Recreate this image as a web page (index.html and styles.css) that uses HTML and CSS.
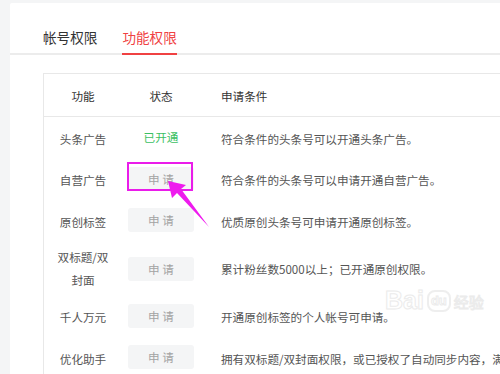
FILE: index.html
```html
<!DOCTYPE html>
<html lang="zh">
<head>
<meta charset="utf-8">
<title>功能权限</title>
<link rel="stylesheet" href="styles.css">
</head>
<body>
<div class="card">
  <div class="tabs">
    <div class="tab">帐号权限</div>
    <div class="tab active">功能权限</div>
  </div>
  <table class="perm">
    <thead>
      <tr><th class="c1">功能</th><th class="c2">状态</th><th class="c3">申请条件</th></tr>
    </thead>
    <tbody>
      <tr><td class="c1">头条广告</td><td class="c2"><span class="ok">已开通</span></td><td class="c3">符合条件的头条号可以开通头条广告。</td></tr>
      <tr><td class="c1">自营广告</td><td class="c2"><span class="btn">申 请</span></td><td class="c3">符合条件的头条号可以申请开通自营广告。</td></tr>
      <tr><td class="c1">原创标签</td><td class="c2"><span class="btn">申 请</span></td><td class="c3">优质原创头条号可申请开通原创标签。</td></tr>
      <tr class="tall"><td class="c1">双标题/双<br>封面</td><td class="c2"><span class="btn">申 请</span></td><td class="c3">累计粉丝数5000以上；已开通原创权限。</td></tr>
      <tr><td class="c1">千人万元</td><td class="c2"><span class="btn">申 请</span></td><td class="c3">开通原创标签的个人帐号可申请。</td></tr>
      <tr><td class="c1">优化助手</td><td class="c2"><span class="btn">申 请</span></td><td class="c3">拥有双标题/双封面权限，或已授权了自动同步内容，满足条件的帐号可申请。</td></tr>
    </tbody>
  </table>
</div>
<div class="highlight"></div>
<svg class="arrow" width="500" height="374" viewBox="0 0 500 374">
  <polygon points="168,181 186,185 181,189 209,227 177,193 172,198" fill="#ee1bee"/>
</svg>
<div class="watermark"><span class="wm-bai">Bai</span><span class="wm-du">du</span><span class="wm-jy">经验</span></div>
</body>
</html>
```
FILE: styles.css
```css
html, body {
  margin: 0;
  padding: 0;
  overflow: hidden;
}
body {
  background: #f4f5f6;
  font-family: "Noto Sans CJK SC", "Noto Sans", sans-serif;
  width: 500px;
  height: 374px;
  position: relative;
}
.card {
  margin: 3px 0 0 10px;
  background: #fff;
  border-top-left-radius: 2px;
  min-height: 420px;
  width: 1000px;
}
.tabs {
  display: flex;
  gap: 25px;
  padding: 24px 0 0 33px;
  border-bottom: 2px solid #ececec;
}
.tab {
  font-size: 13.6px;
  line-height: 20px;
  color: #333;
  padding-bottom: 6px;
  border-bottom: 2px solid transparent;
  margin-bottom: -2px;
}
.tab.active {
  color: #f04142;
  border-bottom-color: #f04142;
}
.perm {
  margin: 18px 0 0 33px;
  border-collapse: collapse;
  border-top: 1px solid #e8e8e8;
  border-left: 1px solid #e8e8e8;
  font-size: 11.6px;
}
.perm th {
  font-weight: normal;
  color: #333;
  height: 40px;
  padding: 2px 0 0;
  border-bottom: 1px solid #e8e8e8;
  line-height: 23px;
}
.perm tbody tr {
  height: 41.5px;
}
.perm td {
  padding: 6px 0 2px;
  line-height: 23px;
  color: #555;
}
.perm tr.tall td {
  padding: 5px 0 3px;
}
.perm td.c2 {
  padding: 4px 0;
}
.c1 {
  width: 78px;
  min-width: 78px;
  text-align: center;
}
.c2 {
  width: 78px;
  min-width: 78px;
  text-align: center;
}
.c3 {
  text-align: left;
  padding-left: 21px !important;
  white-space: nowrap;
}
.ok {
  color: #3cbf63;
}
.btn {
  display: block;
  margin: 0 auto;
  width: 66px;
  height: 24px;
  line-height: 24px;
  background: #f4f5f6;
  border-radius: 3px;
  color: #a3a3a3;
}
.highlight {
  position: absolute;
  left: 127px;
  top: 162px;
  width: 62px;
  height: 25px;
  border: 2px solid #ea1cea;
}
.arrow {
  position: absolute;
  left: 0;
  top: 0;
}
.watermark {
  position: absolute;
  left: 385px;
  top: 288px;
  display: flex;
  align-items: flex-end;
  gap: 3px;
  opacity: 0.5;
}
.wm-bai {
  font-family: "Liberation Sans", sans-serif;
  font-size: 25px;
  font-weight: bold;
  color: #fff;
  -webkit-text-stroke: 1px #d8d8d8;
  line-height: 24px;
}
.wm-du {
  font-family: "Liberation Sans", sans-serif;
  font-size: 13px;
  font-weight: bold;
  color: #fff;
  -webkit-text-stroke: 1px #d8d8d8;
  line-height: 18px;
  padding: 0 2px;
  border: 2px solid #dedede;
  border-radius: 8px;
}
.wm-jy {
  font-size: 15px;
  color: #fff;
  -webkit-text-stroke: 1px #d8d8d8;
  line-height: 20px;
}
```
